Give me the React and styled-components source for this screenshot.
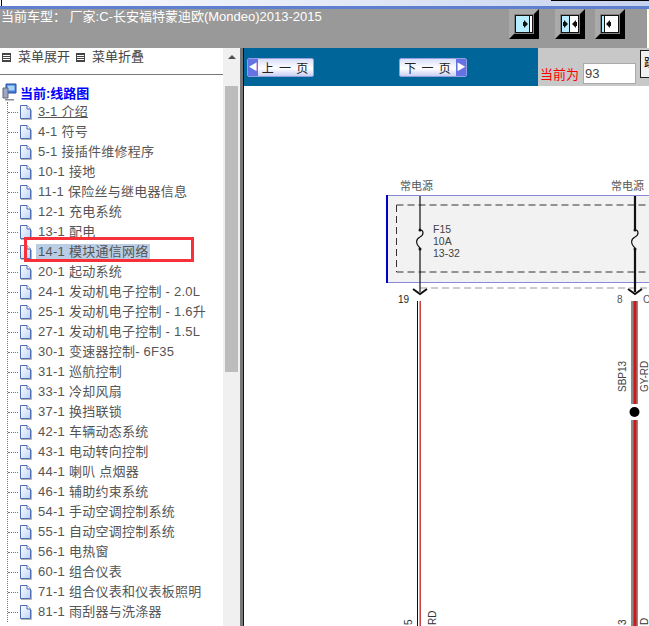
import React from 'react';
import styled, { createGlobalStyle } from 'styled-components';

const Global = createGlobalStyle`
  html, body { margin: 0; padding: 0; background: #fff; }
  body { font-family: "Liberation Sans", "Noto Sans CJK SC", sans-serif; }
`;

const Page = styled.div`
  position: relative;
  width: 649px;
  height: 626px;
  overflow: hidden;
  display: flex;
  flex-direction: column;
`;

const TitleStrip = styled.div`
  height: 6px;
  flex: none;
  background:
    linear-gradient(#000, #000) right top / 98px 1px no-repeat,
    linear-gradient(#000, #000) 1px top / 1px 100% no-repeat,
    linear-gradient(90deg, #fdfdfe 0%, #e4eaf8 50%, #c5d2ef 100%);
  border-bottom: 3px solid #5f7fcf;
`;

const CarBar = styled.div`
  height: 39px;
  flex: none;
  background: linear-gradient(#ffffe8, #ffffe8) right top / 2px 100% no-repeat, #999;
  display: flex;
  justify-content: space-between;
  align-items: flex-start;
`;

const CarLabel = styled.div`
  color: #fff;
  font-size: 13px;
  line-height: 15px;
  padding: 0 0 0 1px;
  white-space: pre;
`;

const SplitButtons = styled.div`
  display: flex;
  width: 140px;
  flex: none;
`;

const SplitButton = styled.div`
  width: 30px;
  height: 30px;
  margin: 0 ${p => p.$gap}px 0 0;
  box-sizing: border-box;
  border: 5px solid;
  border-color: #aaa #000 #000 #aaa;
  background: #808080;
  display: flex;
  align-items: center;
  justify-content: center;
`;

const Body = styled.div`
  flex: 1;
  display: flex;
  min-height: 0;
`;

const Side = styled.div`
  width: 223px;
  flex: none;
  background: #fff;
  overflow: hidden;
`;

const MenuBar = styled.div`
  height: 26px;
  border-bottom: 1px solid #777;
  display: flex;
  align-items: flex-start;
  padding: 0 0 0 2px;
  font-size: 13px;
  line-height: 18px;
  color: #444;
`;

const MenuItem = styled.span`
  display: inline-flex;
  align-items: center;
  gap: 7px;
  margin-right: 6px;
`;

const BoxIcon = styled.i`
  width: 7px;
  height: 7px;
  border: 1px solid #444;
  background: repeating-linear-gradient(#444 0 1px, #fff 1px 2px);
  background-clip: content-box;
`;

const RootRow = styled.div`
  height: 20px;
  margin-top: 7px;
  display: flex;
  align-items: center;
  gap: 3px;
  padding-left: 2px;
  color: #0000ff;
  font-size: 13px;
  font-weight: bold;
`;

const Tree = styled.div`
  margin-left: 7px;
  border-left: 1px dotted #777;
`;

const Row = styled.div`
  height: 20px;
  display: flex;
  align-items: center;
`;

const Dots = styled.i`
  width: 10px;
  flex: none;
  border-top: 1px dotted #777;
`;

const RowText = styled.span`
  font-size: 13px;
  line-height: 16px;
  letter-spacing: 0.25px;
  color: #555;
  margin-left: 4px;
  padding: 0 2px;
  white-space: nowrap;
  text-decoration: ${p => (p.$under ? 'underline' : 'none')};
  background: ${p => (p.$active ? '#b9cde5' : 'transparent')};
`;

const Scroll = styled.div`
  width: 17px;
  flex: none;
  background: #f0f0f0;
  display: flex;
  flex-direction: column;
  align-items: center;
`;

const ScrollArrow = styled.div`
  height: 38px;
  flex: none;
  padding-top: 7px;
  box-sizing: border-box;
  &::before {
    content: '';
    display: block;
    border: 4px solid transparent;
    border-top: 0;
    border-bottom: 4px solid #505050;
  }
`;

const ScrollThumb = styled.div`
  width: 13px;
  height: 286px;
  background: #bcbcbc;
`;

const Divider = styled.div`
  width: 4px;
  flex: none;
  background: #777;
  border-right: 1px solid #111;
  box-sizing: border-box;
`;

const Main = styled.div`
  flex: 1;
  min-width: 0;
  display: flex;
  flex-direction: column;
`;

const NavBar = styled.div`
  height: 38px;
  flex: none;
  display: flex;
  background: #006699;
`;

const NavLeft = styled.div`
  width: 294px;
  flex: none;
  padding: 10px 0 0 3px;
  box-sizing: border-box;
  display: flex;
  gap: 85px;
  align-items: flex-start;
`;

const PageBtn = styled.div`
  width: ${p => p.$w}px;
  height: 19px;
  box-sizing: border-box;
  border: 1px solid #8f9fe0;
  border-radius: 2px;
  background: linear-gradient(#d9def9, #fff 55%, #c9cff3);
  display: flex;
  flex-direction: ${p => (p.$next ? 'row-reverse' : 'row')};
  align-items: center;
  font-size: 12px;
  color: #222;
`;

const BtnArrow = styled.span`
  width: 10px;
  align-self: stretch;
  background: #6472e4;
  color: #fff;
  font-size: 9px;
  line-height: 17px;
  text-align: center;
`;

const BtnText = styled.span`
  flex: 1;
  text-align: center;
  letter-spacing: 1px;
  white-space: pre;
`;

const PagePanel = styled.div`
  flex: 1;
  background: #c8c8c8;
  display: flex;
  align-items: flex-end;
  padding: 0 0 1px 2px;
  gap: 4px;
  position: relative;
`;

const PageLabel = styled.span`
  color: #f00;
  font-size: 13px;
  line-height: 20px;
  white-space: nowrap;
`;

const PageInput = styled.div`
  width: 53px;
  height: 21px;
  box-sizing: border-box;
  border: 1px solid #aaa;
  background: #fff;
  color: #444;
  font-size: 13px;
  line-height: 19px;
  padding-left: 1px;
  margin-bottom: 1px;
`;

const GoBtn = styled.div`
  width: 14px;
  height: 28px;
  box-sizing: border-box;
  margin-bottom: 7px;
  border: 1px solid #222;
  border-right: 0;
  background: #f0f0f0;
  font-size: 12px;
  line-height: 24px;
  padding-left: 3px;
  overflow: hidden;
  white-space: nowrap;
`;

const Canvas = styled.div`
  flex: 1;
  background: #fff;
  min-height: 0;
`;

const Diagram = styled.svg`
  display: block;
`;

const Highlight = styled.div`
  position: absolute;
  left: 24px;
  top: 237px;
  width: 170px;
  height: 25px;
  box-sizing: border-box;
  border: 3px solid #f8303a;
`;

const items = [
  '3-1 介绍', '4-1 符号', '5-1 接插件维修程序', '10-1 接地', '11-1 保险丝与继电器信息',
  '12-1 充电系统', '13-1 配电', '14-1 模块通信网络', '20-1 起动系统',
  '24-1 发动机电子控制 - 2.0L', '25-1 发动机电子控制 - 1.6升', '27-1 发动机电子控制 - 1.5L',
  '30-1 变速器控制- 6F35', '31-1 巡航控制', '33-1 冷却风扇', '37-1 换挡联锁',
  '42-1 车辆动态系统', '43-1 电动转向控制', '44-1 喇叭 点烟器', '46-1 辅助约束系统',
  '54-1 手动空调控制系统', '55-1 自动空调控制系统', '56-1 电热窗', '60-1 组合仪表',
  '71-1 组合仪表和仪表板照明', '81-1 雨刮器与洗涤器',
];

const PageIcon = () => (
  <svg width="13" height="15" viewBox="0 0 13 15" style={{ flex: 'none', marginLeft: 1 }}>
    <defs>
      <linearGradient id="sheet" x1="0" y1="0" x2="1" y2="1">
        <stop offset="0" stopColor="#fff" />
        <stop offset="1" stopColor="#bcd4f4" />
      </linearGradient>
    </defs>
    <path d="M1.5 .5h6.5l3.5 3.5v9.5h-10z" fill="url(#sheet)" stroke="#4f6cb5" />
    <path d="M8 .5v3.5h3.5" fill="#fff" stroke="#4f6cb5" />
    <path d="M2 14.5h10.5V5" fill="none" stroke="#b5b5b5" />
  </svg>
);

const RootIcon = () => (
  <svg width="15" height="18" viewBox="0 0 15 18">
    <path d="M4 1h10v9H4z" fill="#3f7fe0" stroke="#2a4f9c" />
    <path d="M5.5 2.5h7v5h-7z" fill="#a9d4f5" />
    <path d="M1 5h5v10H1z" fill="#9aa7c4" stroke="#667" />
    <path d="M3 16h9v1.5H3z" fill="#889" />
  </svg>
);

const PaneGlyph = ({ kind }) => (
  <svg width="18" height="18" viewBox="0 0 18 18">
    <rect x="0.5" y="0.5" width="17" height="17" fill={kind === 'left' ? '#fff' : '#b8ecff'} stroke="#111" />
    {kind === 'both' && <rect x="9" y="1" width="8" height="16" fill="#fff" />}
    {kind === 'left' && <rect x="1" y="1" width="2" height="16" fill="#b8ecff" />}
    {kind === 'right' && <rect x="15" y="1" width="2" height="16" fill="#fff" />}
    {kind === 'both' && <path d="M8.5 1v16" stroke="#111" />}
    {kind === 'left' && <path d="M3.5 1v16" stroke="#111" />}
    {kind === 'right' && <path d="M14.5 1v16" stroke="#111" />}
    {kind === 'right' && <path d="M8 7h1V5l4 4-4 4v-2H8z" fill="#111" />}
    {kind === 'left' && <path d="M10 7H9V5L5 9l4 4v-2h1z" fill="#111" />}
    {kind === 'both' && <path d="M2 7h1V5l4 4-4 4v-2H2zM16 7h-1V5l-4 4 4 4v-2h1z" fill="#111" />}
  </svg>
);

// canvas origin is (244, 86) in the page
const WiringDiagram = () => (
  <Diagram width="405" height="540" viewBox="244 86 405 540" fontFamily='"Liberation Sans", "Noto Sans CJK SC", sans-serif'>
    <text x="400" y="190" fontSize="11" fill="#555">常电源</text>
    <text x="611" y="190" fontSize="11" fill="#555">常电源</text>
    <rect x="387" y="195.5" width="270" height="87" fill="#f2f2f2" stroke="#8a8ad8" />
    <rect x="386" y="195" width="2" height="88" fill="#0000cc" />
    <path d="M396.5 205H660M396.5 205V272M396.5 272H660" fill="none" stroke="#333" strokeDasharray="7 4" />
    <path d="M420 288H660" stroke="#999" strokeDasharray="7 4" />
    <path d="M420 196V229M420 249V292" stroke="#111" strokeWidth="1.2" />
    <path d="M635 196V229M635 249V292" stroke="#111" strokeWidth="2.2" />
    <path d="M420 230c4 0 4 5 0 7s-5 6 0 11" fill="none" stroke="#111" strokeWidth="1.2" />
    <path d="M635 230c4 0 4 5 0 7s-5 6 0 11" fill="none" stroke="#111" strokeWidth="1.2" />
    <circle cx="420" cy="230" r="1.5" fill="#111" />
    <circle cx="420" cy="249" r="1.5" fill="#111" />
    <circle cx="635" cy="230" r="1.5" fill="#111" />
    <circle cx="635" cy="249" r="1.5" fill="#111" />
    <text x="433" y="233" fontSize="10.5" fill="#444">F15</text>
    <text x="433" y="245" fontSize="10.5" fill="#444">10A</text>
    <text x="433" y="257" fontSize="10.5" fill="#444">13-32</text>
    <path d="M413 289l7 5 7-5M628 289l7 5 7-5" fill="none" stroke="#111" strokeWidth="2" />
    <text x="398" y="303" fontSize="10" fill="#222">19</text>
    <text x="617" y="303" fontSize="10" fill="#555">8</text>
    <text x="643" y="303" fontSize="10" fill="#555">C</text>
    <rect x="417" y="301" width="1" height="325" fill="#111" />
    <rect x="419.5" y="301" width="1.4" height="325" fill="#c03030" />
    <rect x="631" y="301" width="7" height="325" fill="#8a8a8a" />
    <rect x="633.5" y="301" width="3" height="325" fill="#d01818" />
    <rect x="630" y="404" width="9" height="16" fill="#fff" />
    <circle cx="634.5" cy="412" r="5" fill="#000" />
    <text transform="translate(626 392) rotate(-90)" fontSize="10" fill="#444">SBP13</text>
    <text transform="translate(648 392) rotate(-90)" fontSize="10" fill="#444">GY-RD</text>
    <text transform="translate(412 625) rotate(-90)" fontSize="10" fill="#333">5</text>
    <text transform="translate(436 625) rotate(-90)" fontSize="10" fill="#333">RD</text>
    <text transform="translate(626 625) rotate(-90)" fontSize="10" fill="#333">3</text>
    <text transform="translate(648 625) rotate(-90)" fontSize="10" fill="#333">D</text>
  </Diagram>
);

export default function App() {
  return (
    <Page>
      <Global />
      <TitleStrip />
      <CarBar>
        <CarLabel>{'当前车型： 厂家:C-长安福特蒙迪欧(Mondeo)2013-2015'}</CarLabel>
        <SplitButtons>
          <SplitButton $gap={16}><PaneGlyph kind="right" /></SplitButton>
          <SplitButton $gap={10}><PaneGlyph kind="both" /></SplitButton>
          <SplitButton $gap={0}><PaneGlyph kind="left" /></SplitButton>
        </SplitButtons>
      </CarBar>
      <Body>
        <Side>
          <MenuBar>
            <MenuItem><BoxIcon />菜单展开</MenuItem>
            <MenuItem><BoxIcon />菜单折叠</MenuItem>
          </MenuBar>
          <RootRow><RootIcon />当前:线路图</RootRow>
          <Tree>
            {items.map((t, i) => (
              <Row key={t}>
                <Dots />
                <PageIcon />
                <RowText $under={i === 0} $active={i === 7}>{t}</RowText>
              </Row>
            ))}
          </Tree>
        </Side>
        <Scroll>
          <ScrollArrow />
          <ScrollThumb />
        </Scroll>
        <Divider />
        <Main>
          <NavBar>
            <NavLeft>
              <PageBtn $w={67}><BtnArrow>◀</BtnArrow><BtnText>上 一 页</BtnText></PageBtn>
              <PageBtn $w={68} $next><BtnArrow>▶</BtnArrow><BtnText>下 一 页</BtnText></PageBtn>
            </NavLeft>
            <PagePanel>
              <PageLabel>当前为</PageLabel>
              <PageInput>93</PageInput>
              <GoBtn>跳转</GoBtn>
            </PagePanel>
          </NavBar>
          <Canvas><WiringDiagram /></Canvas>
        </Main>
      </Body>
      <Highlight />
    </Page>
  );
}
